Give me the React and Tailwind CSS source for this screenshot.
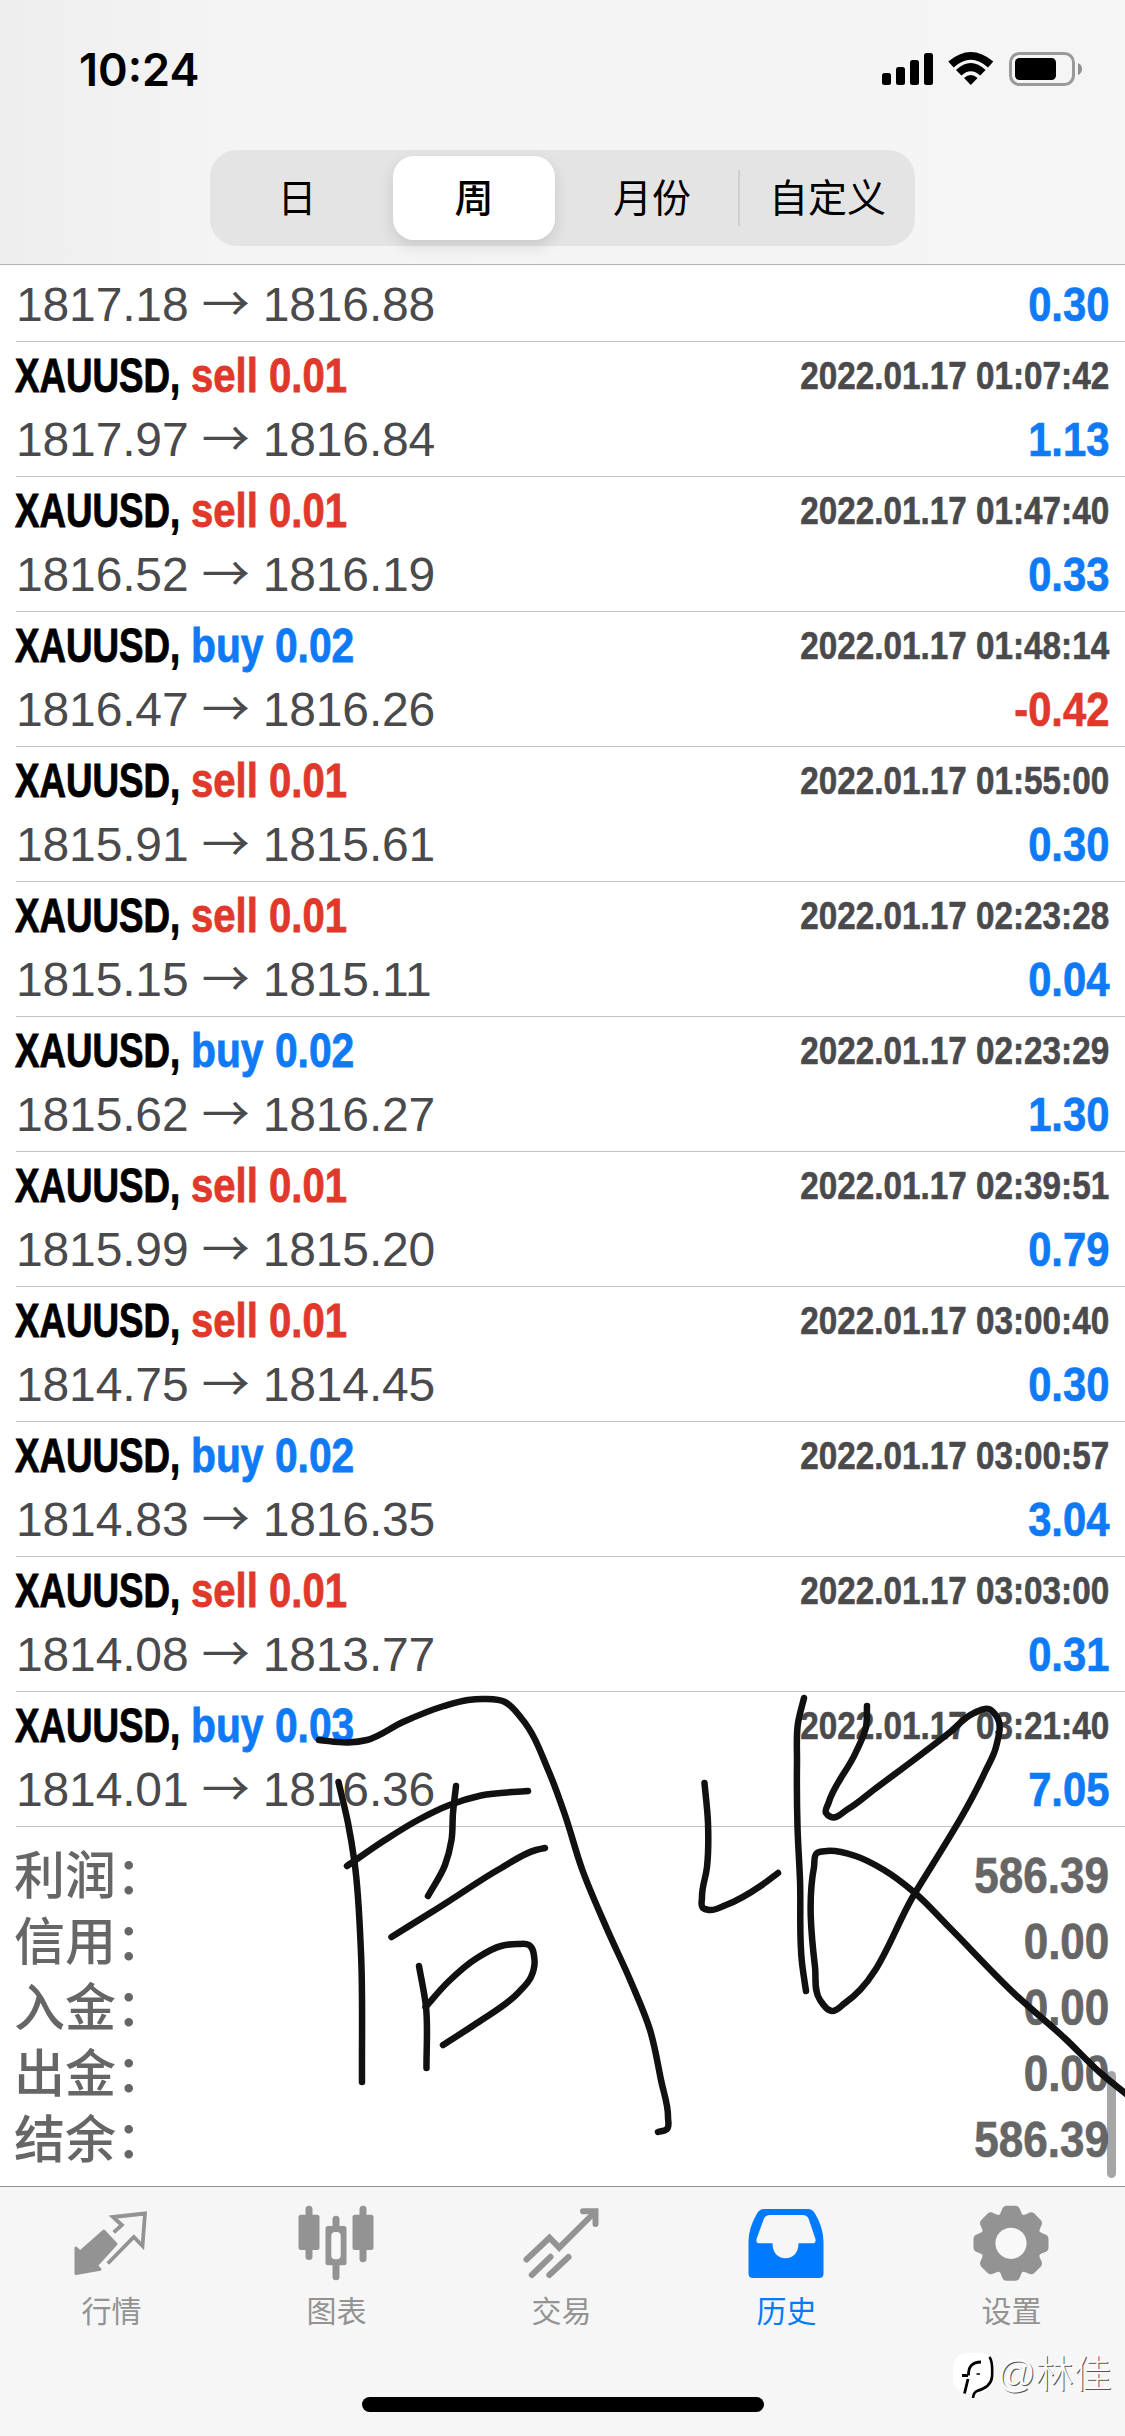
const deals = [
  { side: 'sell', volume: '0.01', open: '1817.97', close: '1816.84', time: '2022.01.17 01:07:42', profit: '1.13' },
  { side: 'sell', volume: '0.01', open: '1816.52', close: '1816.19', time: '2022.01.17 01:47:40', profit: '0.33' },
  { side: 'buy', volume: '0.02', open: '1816.47', close: '1816.26', time: '2022.01.17 01:48:14', profit: '-0.42' },
  { side: 'sell', volume: '0.01', open: '1815.91', close: '1815.61', time: '2022.01.17 01:55:00', profit: '0.30' },
  { side: 'sell', volume: '0.01', open: '1815.15', close: '1815.11', time: '2022.01.17 02:23:28', profit: '0.04' },
  { side: 'buy', volume: '0.02', open: '1815.62', close: '1816.27', time: '2022.01.17 02:23:29', profit: '1.30' },
  { side: 'sell', volume: '0.01', open: '1815.99', close: '1815.20', time: '2022.01.17 02:39:51', profit: '0.79' },
  { side: 'sell', volume: '0.01', open: '1814.75', close: '1814.45', time: '2022.01.17 03:00:40', profit: '0.30' },
  { side: 'buy', volume: '0.02', open: '1814.83', close: '1816.35', time: '2022.01.17 03:00:57', profit: '3.04' },
  { side: 'sell', volume: '0.01', open: '1814.08', close: '1813.77', time: '2022.01.17 03:03:00', profit: '0.31' },
  { side: 'buy', volume: '0.03', open: '1814.01', close: '1816.36', time: '2022.01.17 03:21:40', profit: '7.05' },
];

const totals = [
  ['利润', '586.39'],
  ['信用', '0.00'],
  ['入金', '0.00'],
  ['出金', '0.00'],
  ['结余', '586.39'],
];

const strokes = [
  [[319, 1740], [348, 1742.5], [367, 1740], [403, 1722], [444, 1706], [468, 1700], [485, 1699], [505, 1702], [522, 1719], [549, 1772], [565, 1815], [582, 1869], [607, 1929], [631, 1982], [650, 2030], [661, 2080], [668, 2117], [667, 2129], [658, 2132]],
  [[338.5, 1782], [348, 1823], [354.5, 1862], [361, 1953], [362, 2082]],
  [[347, 1866], [385, 1840], [418, 1820], [449.5, 1805], [481, 1795.5], [528, 1791]],
  [[456, 1786], [453, 1813], [451.5, 1840], [445, 1865], [428, 1896]],
  [[391.5, 1937], [446, 1903], [499.5, 1869], [536, 1850], [545, 1848]],
  [[419, 1966], [426, 2007], [426.5, 2068]],
  [[425.5, 2007], [448, 1982], [477, 1958], [501, 1946], [518, 1944], [529, 1945], [534.5, 1960], [531, 1977], [518, 1993], [477, 2023], [443, 2045]],
  [[704.5, 1783], [708, 1823], [707, 1867], [702, 1897], [703, 1908], [709.5, 1910], [726, 1905], [762, 1885], [778, 1873]],
  [[804, 1698], [798, 1723], [797, 1763], [797.5, 1827], [800, 1880], [802, 1963], [806, 1991]],
  [[867, 1706], [866, 1727], [855.5, 1753], [828.5, 1803], [826, 1813], [831, 1817], [848, 1809], [873.5, 1790], [949, 1733], [974, 1713], [989, 1709], [997, 1717], [996, 1747], [985, 1772], [915, 1893], [845, 2003], [832, 2011], [820, 2000], [815, 1967], [814, 1867], [817, 1853], [827, 1851], [855.5, 1856], [884, 1870], [915, 1893], [949, 1927], [1018, 1997], [1064.5, 2038], [1100.5, 2073], [1130, 2097]],
];

// Spline through the pen points, short segments weigh more in each tangent
function smooth(points) {
  const tangents = points.map((p, i) => {
    const a = points[i - 1] || p;
    const b = points[i + 1] || p;
    const la = Math.hypot(p[0] - a[0], p[1] - a[1]) || 1;
    const lb = Math.hypot(b[0] - p[0], b[1] - p[1]) || 1;
    const x = (p[0] - a[0]) / la / la + (b[0] - p[0]) / lb / lb;
    const y = (p[1] - a[1]) / la / la + (b[1] - p[1]) / lb / lb;
    const l = Math.hypot(x, y) || 1;
    return [x / l, y / l];
  });
  let d = `M${points[0][0]} ${points[0][1]}`;
  for (let i = 1; i < points.length; i++) {
    const p = points[i - 1];
    const q = points[i];
    const k = Math.hypot(q[0] - p[0], q[1] - p[1]) / 3;
    const [tp, tq] = [tangents[i - 1], tangents[i]];
    d += `C${p[0] + tp[0] * k} ${p[1] + tp[1] * k} ${q[0] - tq[0] * k} ${q[1] - tq[1] * k} ${q[0]} ${q[1]}`;
  }
  return d;
}

function StatusBar() {
  return (
    <div className="flex h-[132px] items-start justify-between pl-[79px] pr-[42px] pt-[47px]">
      <span className="font-['Inter',sans-serif] text-[45px] font-semibold leading-[45px]">10:24</span>
      <svg width="201" height="34" viewBox="882 52 201 34" className="mt-[5px]">
        <rect x="882" y="73" width="9" height="12" rx="2.5" />
        <rect x="896" y="67" width="9" height="18" rx="2.5" />
        <rect x="910" y="60" width="9" height="25" rx="2.5" />
        <rect x="924" y="53" width="9" height="32" rx="2.5" />
        <path d="M948.3 61.5 Q970.8 42.5 993.3 61.5 L988 67.500 Q970.8 52 953.6 67.500Z" />
        <path d="M956 70 Q970.8 56 985.6 70 L980.2 75.500 Q970.8 67 961.4 75.500Z" />
        <path d="M964 78 Q970.8 72 977.600 78 L970.8 85Z" />
        <rect x="1010.5" y="53.5" width="63" height="31" rx="9" fill="none" stroke="#999" strokeWidth="3" />
        <rect x="1015" y="58" width="41" height="22" rx="4.5" />
        <path d="M1078 63 Q1082 65 1082 69 T1078 75Z" fill="#8f8f8f" />
      </svg>
    </div>
  );
}

function PeriodTabs() {
  return (
    <div className="mx-auto mt-[18px] flex h-24 w-[705px] items-center rounded-[27px] bg-[#e5e4e5] text-[39px] leading-none">
      <div className="w-[176px] pr-0.5 text-center">日</div>
      <div className="flex w-44 justify-center">
        <div className="flex h-[84px] w-[162px] items-center justify-center rounded-[21px] bg-white font-medium shadow-[0_6px_16px_rgba(0,0,0,0.12)]">周</div>
      </div>
      <div className="w-44 pl-1 text-center">月份</div>
      <div className="h-14 w-[2px] bg-[#cfcfd1]" />
      <div className="w-[175px] text-center">自定义</div>
    </div>
  );
}

function PriceRow({ open, close, profit }) {
  return (
    <div className="flex justify-between">
      <div className="h-12 whitespace-pre tracking-[-0.15px] text-[#4a4a4d]">
        {open} <span className="font-['Noto_Sans_CJK_SC',sans-serif] leading-[0]">→</span> {close}
      </div>
      <div className={`origin-right scale-x-[0.87] font-bold [-webkit-text-stroke:0.7px] ${profit.startsWith('-') ? 'text-[#e0392b]' : 'text-[#0f7af5]'}`}>{profit}</div>
    </div>
  );
}

function Deal({ deal }) {
  return (
    <div className="ml-4 h-[135px] border-b border-[#c2c3c5] pr-4 pt-[10px]">
      <div className="flex h-12 items-start">
        <div className="w-[175px]">
          <div className="-ml-px origin-left scale-x-[0.765] font-bold [-webkit-text-stroke:0.9px]">XAUUSD,</div>
        </div>
        <div className={`origin-left whitespace-pre font-bold [-webkit-text-stroke:0.8px] ${deal.side === 'sell' ? 'scale-x-[0.835] text-[#e0392b]' : 'scale-x-[0.85] text-[#0f7af5]'}`}>
          {deal.side} {deal.volume}
        </div>
        <div className="ml-auto mt-1 origin-right scale-x-[0.853] whitespace-nowrap text-[39px] font-bold leading-[39px] text-[#4a4a4d] [-webkit-text-stroke:0.6px]">{deal.time}</div>
      </div>
      <div className="mt-4">
        <PriceRow open={deal.open} close={deal.close} profit={deal.profit} />
      </div>
    </div>
  );
}

function QuotesIcon() {
  return (
    <svg width="84" height="84" viewBox="0 0 84 84">
      <path d="M33.8 31 46 44 26.2 65.7 30 69.3 6 73.5V48L10 52Z" fill="currentColor" stroke="currentColor" strokeWidth="3" strokeLinejoin="round" />
      <path d="M43.8 32.3 51.8 25 43 17 75 13.5 72.5 46 63.8 37 37.8 63.5" fill="none" stroke="currentColor" strokeWidth="3.8" />
    </svg>
  );
}

function ChartIcon() {
  return (
    <svg width="84" height="84" viewBox="0 0 84 84" fill="currentColor">
      <rect x="3.5" y="14.7" width="21" height="35.3" rx="2.5" />
      <rect x="10.5" y="5.7" width="7" height="54.3" rx="3.5" />
      <rect x="30.5" y="26" width="21" height="39.3" rx="2.5" />
      <rect x="37.5" y="15.7" width="7" height="64.6" rx="3.5" />
      <rect x="36.3" y="32" width="9.4" height="27.3" rx="4" fill="#f8f8f8" />
      <rect x="57.5" y="14.7" width="21" height="35.3" rx="2.5" />
      <rect x="64.5" y="5.7" width="7" height="56.6" rx="3.5" />
    </svg>
  );
}

function TradeIcon() {
  return (
    <svg width="84" height="84" viewBox="0 0 84 84" fill="none" stroke="currentColor" strokeWidth="6" strokeLinecap="round">
      <path d="M6.5 59.5 29.5 37.7 39.2 47.7 75 12" />
      <path d="M63 11.2H75.5V24" />
      <path d="M11.8 75 30.5 56.8M29.3 75 48.5 57" />
    </svg>
  );
}

function HistoryIcon() {
  return (
    <svg width="84" height="84" viewBox="0 0 84 84" fill="currentColor" fillRule="evenodd">
      <path d="M19 9H63Q67.5 9 70 13.5 78.5 28 78.5 42V73.5Q78.5 78 74 78H8Q3.5 78 3.5 73.5V42Q3.5 28 12 13.5 14.500 9 19 9ZM25 15Q20.5 15 19 18.5L11.7 38.5Q10.5 43.3 14.5 43.3H27.5C27.5 53 33 58.300 40.500 58.300S53.500 53 53.500 43.300H67.5Q71.5 43.3 70.3 38.5L63.5 18.5Q62 15 57.5 15Z" />
    </svg>
  );
}

function SettingsIcon() {
  return (
    <svg width="84" height="84" viewBox="0 0 84 84" fill="currentColor">
      <g transform="translate(41 43.3)">
        <circle r="30" />
        {[0, 45, 90, 135, 180, 225, 270, 315].map((a) => (
          <path key={a} transform={`rotate(${a})`} d="M-13-27Q-10.5-29-9.3-33-8-37.5-4.5-37.5H4.5Q8-37.5 9.3-33 10.5-29 13-27Z" />
        ))}
        <circle r="15.6" fill="#f8f8f8" />
      </g>
    </svg>
  );
}

const tabs = [
  { label: '行情', Icon: QuotesIcon },
  { label: '图表', Icon: ChartIcon },
  { label: '交易', Icon: TradeIcon },
  { label: '历史', Icon: HistoryIcon, active: true },
  { label: '设置', Icon: SettingsIcon },
];

function Watermark() {
  return (
    <div className="absolute left-[953px] top-[2350px] flex items-center">
      <svg width="42" height="48" viewBox="0 0 42 48">
        <rect x="0" y="3" width="40" height="40" rx="14" fill="#fff" />
        <path d="M11.500 43.500 15 29M9 25.500H15M15.500 25.500Q15 12 28 12" fill="none" stroke="#000" strokeWidth="2.8" />
        <path d="M23.500 24H27" stroke="#000" strokeWidth="1.5" />
        <path d="M36.500 7Q40 12 39 27 38 37 24 41 20.500 42.500 20 48" fill="none" stroke="#000" strokeWidth="2.6" />
      </svg>
      <span className="ml-0.5 whitespace-nowrap text-[38px] font-light leading-[40px] text-[#fcfcfc] [text-shadow:1px_1px_0_#555]">@林佳</span>
    </div>
  );
}

export default function App() {
  return (
    <div className="relative flex h-[2436px] w-[1125px] flex-col overflow-hidden bg-white font-['Liberation_Sans','Noto_Sans_CJK_SC',sans-serif] text-black">
      <header className="h-[265px] border-b border-[#b2b2b4] bg-linear-to-r from-[#eeeeee] via-[#f5f4f5] via-20% to-[#f6f5f6]">
        <StatusBar />
        <PeriodTabs />
      </header>

      <main className="flex-1 text-5xl leading-[48px]">
        {/* first deal is scrolled half under the header */}
        <div className="ml-4 h-[77px] border-b border-[#c2c3c5] pr-4 pt-4">
          <PriceRow open="1817.18" close="1816.88" profit="0.30" />
        </div>
        {deals.map((deal) => (
          <Deal key={deal.time} deal={deal} />
        ))}
        <div className="ml-3.5 mr-4 pt-4 font-medium text-[#666]">
          {totals.map(([label, value]) => (
            <div key={label} className="flex h-[66px] items-center justify-between">
              <span className="mb-2 font-['Noto_Sans_CJK_SC',sans-serif] text-[51px]">{label}：</span>
              <span className="origin-right scale-x-[0.88] text-[50px] font-bold [-webkit-text-stroke:0.7px]">{value}</span>
            </div>
          ))}
        </div>
      </main>

      <nav className="flex h-[250px] flex-col items-center justify-between border-t border-[#8e8e90] bg-[#f6f6f6] pb-6">
        <div className="-ml-0.5 flex w-full pt-[13px]">
          {tabs.map(({ label, Icon, active }) => (
            <div key={label} className={`flex w-[225px] flex-col items-center ${active ? 'text-[#007aff]' : 'text-[#939393]'}`}>
              <Icon />
              <span className="mt-[11px] text-[30px] leading-[34px]">{label}</span>
            </div>
          ))}
        </div>
        <div className="h-[15px] w-[402px] rounded-full bg-black" />
      </nav>

      <div className="absolute left-[1107px] top-[2071px] h-[107px] w-[9px] rounded-full bg-black/35" />
      <svg className="absolute left-0 top-0" width="1125" height="2436" fill="none" stroke="#111" strokeWidth="6.5" strokeLinecap="round" strokeLinejoin="round">
        {strokes.map((points, i) => (
          <path key={i} d={smooth(points)} />
        ))}
      </svg>
      <Watermark />
    </div>
  );
}
